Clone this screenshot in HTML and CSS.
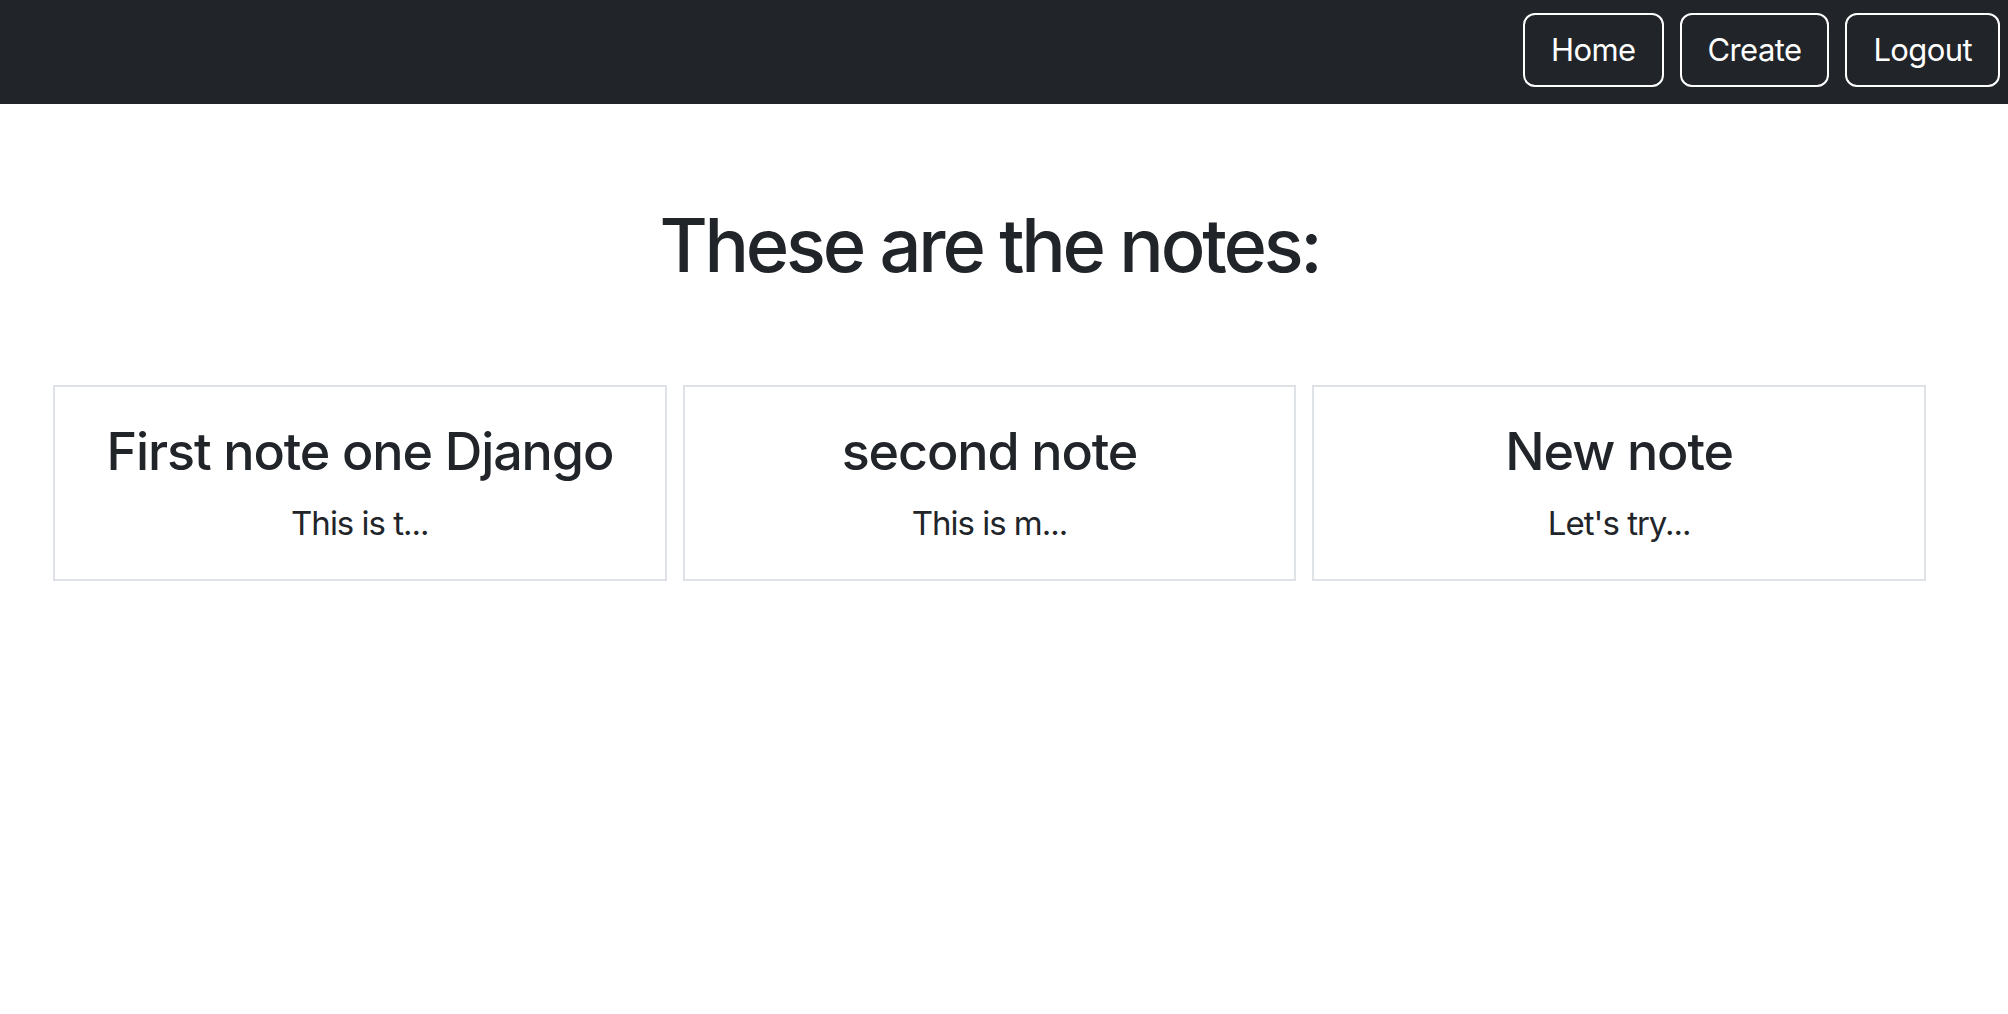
FILE: index.html
```html
<!DOCTYPE html>
<html lang="en">
<head>
<meta charset="utf-8">
<title>Notes</title>
<link rel="stylesheet" href="styles.css">
</head>
<body>
<nav class="navbar">
  <a class="nav-btn" href="#">Home</a>
  <a class="nav-btn" href="#">Create</a>
  <a class="nav-btn" href="#">Logout</a>
</nav>
<main class="content">
  <h1 class="page-title">These are the notes:</h1>
  <div class="notes">
    <div class="note-card">
      <h2 class="note-title">First note one Django</h2>
      <p class="note-body">This is t...</p>
    </div>
    <div class="note-card">
      <h2 class="note-title">second note</h2>
      <p class="note-body">This is m...</p>
    </div>
    <div class="note-card">
      <h2 class="note-title">New note</h2>
      <p class="note-body">Let's try...</p>
    </div>
  </div>
</main>
</body>
</html>
```

FILE: styles.css
```css
* { box-sizing: border-box; }
html, body {
  margin: 0;
  background: #fff;
  font-family: Inter, "Noto Sans", "Liberation Sans", sans-serif;
  color: #212529;
}
.navbar {
  height: 104px;
  background: #212529;
  display: flex;
  justify-content: flex-end;
  align-items: flex-start;
  gap: 16px;
  padding: 13px 8px 0;
}
.nav-btn {
  display: block;
  color: #fff;
  text-decoration: none;
  border: 2px solid #fff;
  border-radius: 12px;
  font-size: 31px;
  line-height: 46px;
  letter-spacing: -0.6px;
  padding: 12px 26px;
}
.content {
  padding: 0 82px 0 53px;
}
.page-title {
  margin: 96px 0 0;
  text-align: center;
  font-size: 74px;
  line-height: 90px;
  font-weight: 500;
  letter-spacing: -3.2px;
}
.notes {
  margin-top: 95px;
  display: grid;
  grid-template-columns: repeat(3, 1fr);
  gap: 16px;
}
.note-card {
  height: 196px;
  border: 2px solid #dee2e6;
  padding: 34px 10px 0;
  text-align: center;
}
.note-title {
  margin: 0;
  font-size: 52px;
  line-height: 62px;
  font-weight: 500;
  letter-spacing: -1.1px;
}
.note-body {
  margin: 16px 0 0;
  font-size: 33px;
  line-height: 49px;
  letter-spacing: -1px;
}
```
